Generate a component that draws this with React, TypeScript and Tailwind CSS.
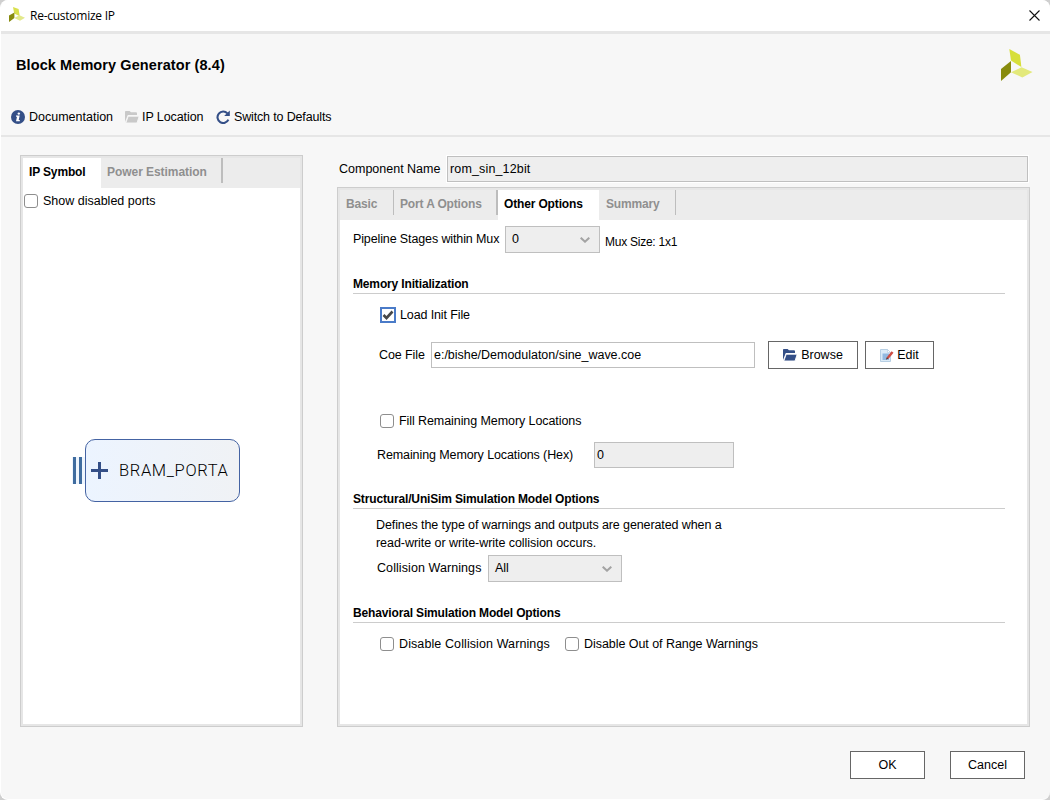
import React from "react";
import clsx from "clsx";

const Logo: React.FC<{ className?: string }> = ({ className }) => (
    <svg viewBox="0 0 32 32" className={className}>
        <path d="M8.3 0 18.9 5.8 20.4 18 10 11.6z" fill="#d7df3b" />
        <path d="M10 12v11.3L0 32V20z" fill="#878b0d" />
        <path d="M10 23.3 20.6 18.3 31.5 23 21.4 28.4z" fill="#e3e97b" />
    </svg>
);

const SmallLogo: React.FC = () => (
    <svg viewBox="0 0 16 15" className="mb-0.5 h-[15px] w-4">
        <path d="M4 0 9.6 2 10.8 9.3 5.2 6.5z" fill="#d9e04d" />
        <path d="M5.4 5.4V11L0 15V8.4z" fill="#878b0d" />
        <path d="M5.2 11 10.5 8.2 16 10.8 11 13.8z" fill="#e3e98c" />
    </svg>
);

const InfoIcon: React.FC = () => (
    <svg viewBox="0 0 14 14" className="h-3.5 w-3.5">
        <circle cx="7" cy="7" r="7" fill="#344f87" />
        <circle cx="7.8" cy="3.6" r="1.2" fill="#fff" />
        <path d="M5 5.6H8.7L7.7 10.1H8.8V11.3H5L6 6.8H5z" fill="#fff" />
    </svg>
);

const FolderIcon: React.FC<{ color: string; gap: string }> = ({ color, gap }) => (
    <svg viewBox="0 0 14 12" className="h-3 w-3.5">
        <path d="M0 0.8Q0 0 0.8 0H4.6L6 1.2H11q1 0 1 1V4H2.8L0 11z" fill={color} />
        <path d="M3.2 5.2H14.2L12 12H0.8z" fill={color} stroke={gap} strokeWidth="0.9" />
    </svg>
);

const RefreshIcon: React.FC = () => (
    <svg viewBox="0 0 14 14" className="h-3.5 w-3.5">
        <path d="M11.4 3.4A5.7 5.7 0 1 0 12.4 9.6" fill="none" stroke="#344f87" strokeWidth="2.1" />
        <path d="M13.8 0.4V6H8.2z" fill="#344f87" />
    </svg>
);

const EditIcon: React.FC = () => (
    <svg viewBox="0 0 14 13" className="h-[13px] w-3.5">
        <path d="M0.5 0.5H7.5L10.5 3.5V12.5H0.5z" fill="#dcebf7" stroke="#b7cfe4" />
        <path d="M2.5 4.5H9V11H2.5z" fill="#93b9e0" />
        <path d="M7.5 0.5V3.5H10.5z" fill="#fff" stroke="#b7cfe4" strokeWidth="0.7" />
        <path d="M6.3 10.2 7 8 11.6 2.2 13.5 3.8 8.8 9.6z" fill="#cf4b41" />
        <path d="M6 10.8 6.8 8.3 8.4 9.6z" fill="#5a4038" />
    </svg>
);

const Checkbox: React.FC<{
    label: string;
    checked?: boolean;
    className?: string;
}> = ({ label, checked, className }) => (
    <div className={clsx("flex items-center whitespace-nowrap", className)}>
        {checked ? (
            <span className="mr-1 flex h-4 w-4 items-center justify-center border-2 border-[#4a7bc8] bg-white">
                <svg viewBox="0 0 12 12" className="h-3 w-3">
                    <path d="M1.5 6 4.5 9 10.5 2.5" fill="none" stroke="#484848" strokeWidth="2.6" />
                </svg>
            </span>
        ) : (
            <span className="mr-[5px] h-3.5 w-3.5 rounded-[3px] border-[1.5px] border-[#8e8e8e] bg-white" />
        )}
        {label}
    </div>
);

const Select: React.FC<{ value: string; className?: string }> = ({ value, className }) => (
    <div
        className={clsx(
            "flex h-[27px] items-center justify-between border border-[#bfbfbf] bg-[#eee] pr-[9px] pb-0.5 pl-1.5",
            className
        )}
    >
        {value}
        <svg viewBox="0 0 10 6" className="mt-[3px] h-1.5 w-2.5">
            <path d="M0.7 0.7 5 4.7 9.3 0.7" fill="none" stroke="#a3a3a3" strokeWidth="2" />
        </svg>
    </div>
);

const Button: React.FC<{ children: React.ReactNode; className?: string }> = ({
    children,
    className,
}) => (
    <button
        className={clsx(
            "flex h-7 items-center justify-center border border-[#666] bg-white",
            className
        )}
    >
        {children}
    </button>
);

const SectionTitle: React.FC<{ title: string; className?: string }> = ({ title, className }) => (
    <div
        className={clsx(
            "ml-[13px] h-[18px] w-[652px] border-b border-[#ccc] text-[12px] font-bold leading-4 tracking-[-0.15px]",
            className
        )}
    >
        {title}
    </div>
);

const panelClassName =
    "border border-[#cdcdcd] bg-white outline-2 -outline-offset-3 outline-[#e6e6e6] p-0.5";

const tabBarClassName =
    "flex h-[30px] bg-[#ececec] text-[12px] leading-4 font-bold tracking-[-0.15px] whitespace-nowrap text-[#8f8f8f]";

const App: React.FC = () => {
    return (
        <div className="h-[800px] w-[1050px] overflow-hidden bg-[#cfcfcf] font-['Liberation_Sans',Arial,sans-serif] text-[12.5px] leading-4 text-black">
            <div className="flex h-full flex-col overflow-hidden rounded-lg border-b border-l border-white bg-[#f7f7f7]">
                <div className="flex h-[34px] shrink-0 items-center border-b-3 border-[#e6e6e6] bg-white pr-[10px] pl-2">
                    <SmallLogo />
                    <span className="ml-[5px] flex-1 font-['Open_Sans',sans-serif] text-[12px] tracking-[-0.25px]">
                        Re-customize IP
                    </span>
                    <svg viewBox="0 0 11 11" className="h-[11px] w-[11px]">
                        <path d="M0.5 0.5 10.5 10.5M10.5 0.5 0.5 10.5" stroke="#111" strokeWidth="1.1" />
                    </svg>
                </div>

                <div className="flex h-[103px] shrink-0 flex-col border-b-2 border-[#e6e6e6]">
                    <div className="flex h-[62px] items-center justify-between pr-[17px] pl-[15px]">
                        <h1 className="text-[14.5px] font-bold tracking-[0.09px]">
                            Block Memory Generator (8.4)
                        </h1>
                        <Logo className="h-8 w-8" />
                    </div>
                    <div className="mt-3 flex h-[18px] items-center whitespace-nowrap pl-[10px]">
                        <InfoIcon />
                        <span className="mr-3 ml-1 w-[84px]">Documentation</span>
                        <FolderIcon color="#c9c9c9" gap="#f7f7f7" />
                        <span className="mr-3 ml-[3px] w-[62px] tracking-[-0.08px]">IP Location</span>
                        <RefreshIcon />
                        <span className="ml-1 tracking-[-0.15px]">Switch to Defaults</span>
                    </div>
                </div>

                <div className="flex h-[590px] shrink-0 pt-[18px] pl-[19px]">
                    <div className={clsx("h-[572px] w-[283px]", panelClassName)}>
                        <div className={tabBarClassName}>
                            <div className="w-[78px] bg-white pt-1.5 pl-1.5 text-black">
                                IP Symbol
                            </div>
                            <div className="h-[25px] w-[122px] border-r-2 border-[#bdbdbd] pt-1.5 pl-1.5 tracking-[-0.05px]">
                                Power Estimation
                            </div>
                        </div>
                        <Checkbox label="Show disabled ports" className="mt-[5px] ml-px" />
                        <div className="mt-[230px] ml-[49px] flex items-center">
                            <div className="flex h-[27px] w-[13px] gap-[3px] bg-[#eef5fd] pl-px">
                                <div className="w-[3px] bg-[#3f6c9f]" />
                                <div className="w-[3px] bg-[#3f6c9f]" />
                            </div>
                            <div className="flex h-[63px] w-[155px] items-center rounded-[10px] border border-[#4463a3] bg-linear-to-r from-[#ecf4ff] to-[#f0f2f5] pl-[5px]">
                                <svg viewBox="0 0 17 17" className="h-[17px] w-[17px]">
                                    <path d="M0 8.5H17M8.5 0V17" stroke="#344f87" strokeWidth="3" />
                                </svg>
                                <span className="ml-[11px] font-['Roboto',sans-serif] text-[16.5px] font-light tracking-[0.65px]">
                                    BRAM_PORTA
                                </span>
                            </div>
                        </div>
                    </div>

                    <div className="ml-[34px] w-[693px]">
                        <div className="flex items-center pt-px pl-0.5">
                            <span className="w-[108px]">Component Name</span>
                            <div className="flex h-[26px] w-[581px] items-center border border-[#bfbfbf] bg-[#eee] pl-0.5 tracking-[0.15px] outline outline-white">
                                rom_sin_12bit
                            </div>
                        </div>

                        <div className={clsx("mt-[5px] h-[540px]", panelClassName)}>
                            <div className={tabBarClassName}>
                                <div className="h-[25px] w-[54px] border-r border-[#bdbdbd] pt-1.5 pl-1.5">
                                    Basic
                                </div>
                                <div className="h-[25px] w-[104px] border-r-2 border-[#bdbdbd] pt-1.5 pl-1.5">
                                    Port A Options
                                </div>
                                <div className="w-[101px] bg-white pt-1.5 pl-1.5 text-black">
                                    Other Options
                                </div>
                                <div className="h-[25px] w-[77px] border-r border-[#bdbdbd] pt-1.5 pl-[7px]">
                                    Summary
                                </div>
                            </div>

                            <div className="mt-1.5 flex h-[27px] items-center whitespace-nowrap pl-[13px]">
                                <span className="w-[152px] pb-0.5 tracking-[-0.12px]">
                                    Pipeline Stages within Mux
                                </span>
                                <Select value="0" className="w-[95px]" />
                                <span className="mt-1 ml-[5px] text-[12px] tracking-[-0.25px]">
                                    Mux Size: 1x1
                                </span>
                            </div>

                            <SectionTitle title="Memory Initialization" className="mt-[23px]" />
                            <Checkbox
                                label="Load Init File"
                                checked
                                className="mt-[13px] ml-10 tracking-[-0.12px]"
                            />
                            <div className="mt-[18px] flex h-7 items-center pl-[39px]">
                                <span className="w-[52px] tracking-[-0.1px]">Coe File</span>
                                <div className="flex h-[26px] w-[324px] items-center border border-[#bfbfbf] bg-white pl-0.5 tracking-[-0.02px]">
                                    e:/bishe/Demodulaton/sine_wave.coe
                                </div>
                                <Button className="ml-[13px] w-[90px]">
                                    <FolderIcon color="#344f87" gap="#fff" />
                                    <span className="ml-1">Browse</span>
                                </Button>
                                <Button className="ml-[7px] w-[69px]">
                                    <EditIcon />
                                    <span className="ml-[3px]">Edit</span>
                                </Button>
                            </div>

                            <Checkbox
                                label="Fill Remaining Memory Locations"
                                className="mt-11 ml-10 tracking-[-0.08px]"
                            />
                            <div className="mt-[13px] flex h-[26px] items-center pl-[37px]">
                                <span className="w-[217px] tracking-[-0.1px]">
                                    Remaining Memory Locations (Hex)
                                </span>
                                <div className="flex h-[26px] w-[140px] items-center border border-[#bfbfbf] bg-[#eee] pl-0.5">
                                    0
                                </div>
                            </div>

                            <SectionTitle
                                title="Structural/UniSim Simulation Model Options"
                                className="mt-[23px]"
                            />
                            <p className="mt-[7px] pl-9 leading-[18px] tracking-[-0.1px]">
                                Defines the type of warnings and outputs are generated when a
                                <br />
                                <span className="tracking-[-0.05px]">
                                    read-write or write-write collision occurs.
                                </span>
                            </p>
                            <div className="mt-[3px] flex h-[27px] items-center pl-[37px]">
                                <span className="w-[111px] pb-0.5 tracking-[0.08px]">
                                    Collision Warnings
                                </span>
                                <Select value="All" className="w-[134px]" />
                            </div>

                            <SectionTitle title="Behavioral Simulation Model Options" className="mt-[23px]" />
                            <div className="mt-[13px] flex pl-10">
                                <Checkbox
                                    label="Disable Collision Warnings"
                                    className="w-[185px] tracking-[0.1px]"
                                />
                                <Checkbox
                                    label="Disable Out of Range Warnings"
                                    className="tracking-[-0.05px]"
                                />
                            </div>
                        </div>
                    </div>
                </div>

                <div className="mt-6 flex justify-end gap-[25px] pr-[25px]">
                    <Button className="w-[75px]">OK</Button>
                    <Button className="w-[75px]">Cancel</Button>
                </div>
            </div>
        </div>
    );
};

export default App;
